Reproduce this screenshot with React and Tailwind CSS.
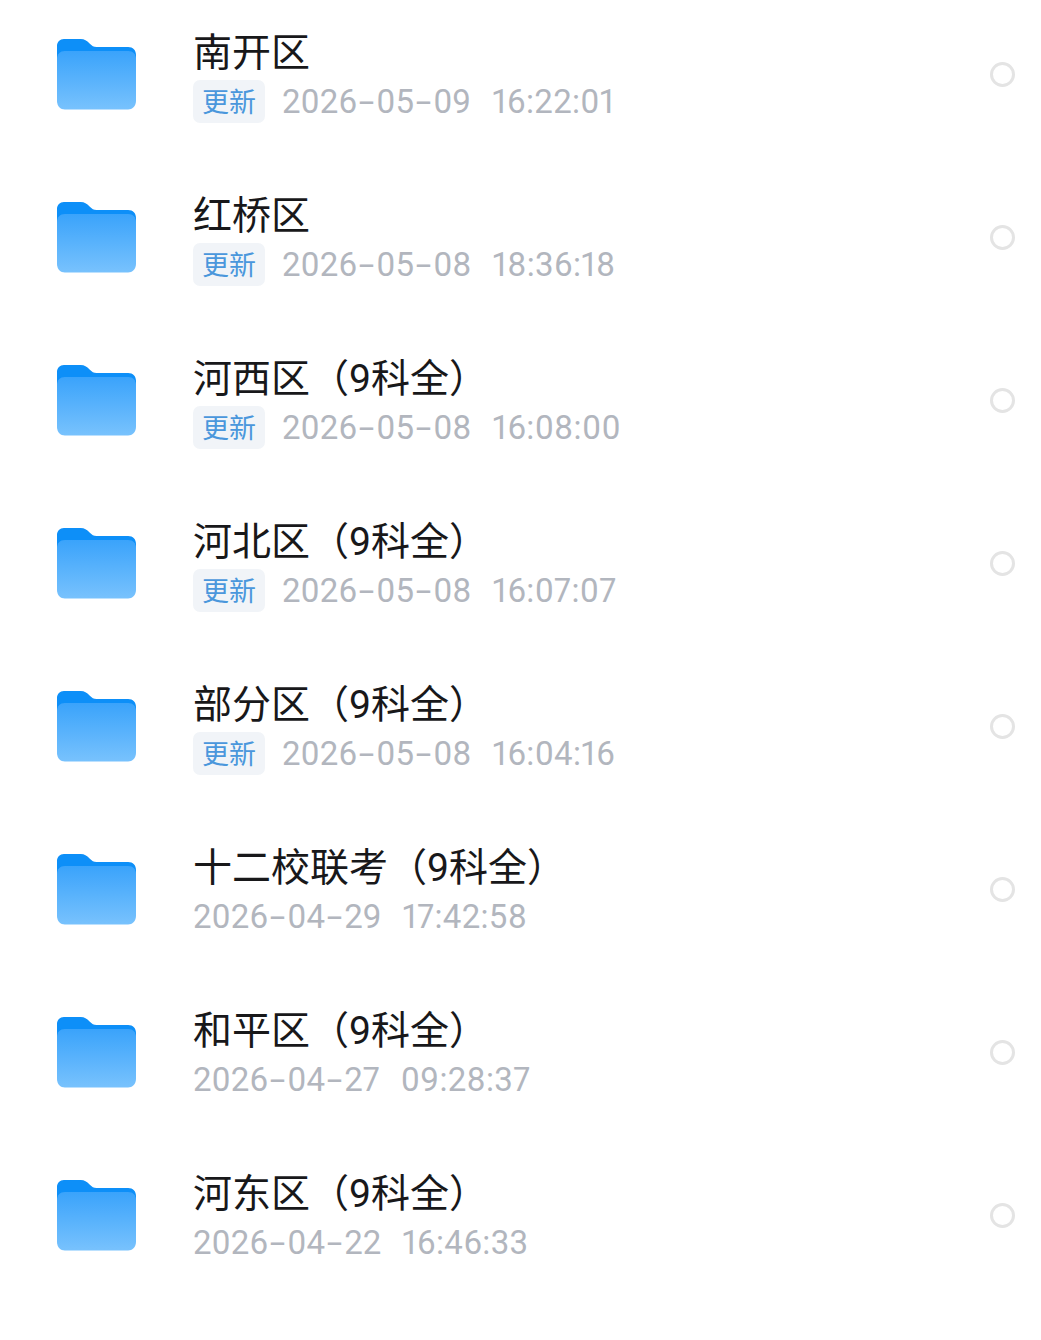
const rows = [
  ["南开区", "2026-05-09", "16:22:01", true],
  ["红桥区", "2026-05-08", "18:36:18", true],
  ["河西区（9科全）", "2026-05-08", "16:08:00", true],
  ["河北区（9科全）", "2026-05-08", "16:07:07", true],
  ["部分区（9科全）", "2026-05-08", "16:04:16", true],
  ["十二校联考（9科全）", "2026-04-29", "17:42:58", false],
  ["和平区（9科全）", "2026-04-27", "09:28:37", false],
  ["河东区（9科全）", "2026-04-22", "16:46:33", false],
];

function Folder({ id }) {
  return (
    <svg width="79" height="71" viewBox="0 0 80 71" preserveAspectRatio="none" className="shrink-0">
      <defs>
        <linearGradient id={`f${id}`} x1="0" y1="0" x2="0" y2="1">
          <stop offset="0" stopColor="#3aa3fb" />
          <stop offset="1" stopColor="#78c2fd" />
        </linearGradient>
      </defs>
      <path d="M7 0H24C28 0 30 1.5 33 4.500C35.500 7 37 8 40 8H72C77 8 80 11 80 16V40H0V7C0 3 3 0 7 0Z" fill="#0d8ff8" />
      <path d="M8 12H72C77 12 80 15 80 20V62C80 67 76 70.500 72 70.500H8C3.500 70.500 0 67 0 62V20C0 15 3 12 8 12Z" fill={`url(#f${id})`} />
    </svg>
  );
}

function DateText({ value }) {
  const [y, m, d] = value.split("-");
  const dash = <span className="mx-[5px] inline-block scale-x-[1.7]">-</span>;
  return (
    <span className="whitespace-nowrap">
      {y}{dash}{m}{dash}{d}
    </span>
  );
}

function Row({ name, date, time, updated, id }) {
  return (
    <div className="flex h-[163px] items-start pl-[57px] pr-[26px] pt-[33px]">
      <div className="mt-[6px]"><Folder id={id} /></div>
      <div className="ml-[57px] flex-1">
        <div className="h-[41px] text-[39px] leading-[41px] text-[#18181a] whitespace-nowrap">{name}</div>
        <div className="mt-[6px] flex h-[43px] items-center text-[33px] leading-[43px] text-[#b2b6be] proportional-nums">
          {updated && (
            <span className="mr-[17px] flex h-[43px] w-[72px] items-center justify-center rounded-[7px] bg-[#f1f4f8] pt-[3px] text-[27px] text-[#4a97dc]">更新</span>
          )}
          <DateText value={date} />
          <span className="ml-[21px] whitespace-nowrap tracking-[0.3px]">{time}</span>
        </div>
      </div>
      <div className="mt-[29px] h-[25px] w-[25px] shrink-0 rounded-full border-[3px] border-[#e4e4e4]" />
    </div>
  );
}

export default function App() {
  return (
    <div className="h-[1340px] w-[1041px] overflow-hidden bg-white font-['Roboto','Noto_Sans_CJK_SC',sans-serif]">
      {rows.map((r, i) => (
        <Row key={r[0]} id={i} name={r[0]} date={r[1]} time={r[2]} updated={r[3]} />
      ))}
    </div>
  );
}
